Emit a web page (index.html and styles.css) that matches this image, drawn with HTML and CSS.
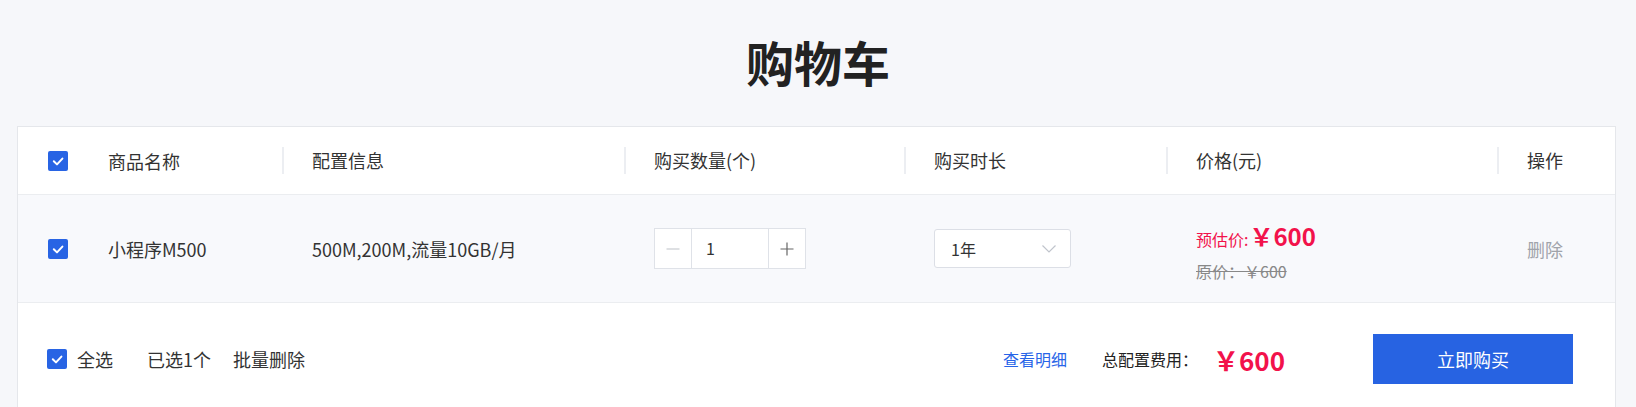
FILE: index.html
```html
<!DOCTYPE html>
<html lang="zh-CN">
<head>
    <meta charset="UTF-8">
    <meta name="viewport" content="width=device-width, initial-scale=1.0">
    <title>购物车</title>
    <link rel="stylesheet" href="styles.css">
</head>
<body>
    <h1 class="title">购物车</h1>

    <div class="cart">
        <div class="cart-head">
            <div class="cell cell-first">
                <span class="check"><svg viewBox="0 0 20 20"><path d="M5.8 10.2l3.2 3.2 5.4-5.8"/></svg></span>
                <span>商品名称</span>
            </div>
            <div class="cell"><span class="th">配置信息</span></div>
            <div class="cell"><span class="th">购买数量(个)</span></div>
            <div class="cell"><span class="th">购买时长</span></div>
            <div class="cell"><span class="th">价格(元)</span></div>
            <div class="cell"><span class="th">操作</span></div>
        </div>

        <div class="cart-row">
            <div class="cell cell-first">
                <span class="check"><svg viewBox="0 0 20 20"><path d="M5.8 10.2l3.2 3.2 5.4-5.8"/></svg></span>
                <span>小程序M500</span>
            </div>
            <div class="cell td">500M,200M,流量10GB/月</div>
            <div class="cell td">
                <div class="stepper">
                    <span class="step step-minus"><svg viewBox="0 0 14 14"><path d="M0.5 7h13"/></svg></span>
                    <span class="step-value">1</span>
                    <span class="step step-plus"><svg viewBox="0 0 14 14"><path d="M0.5 7h13M7 0.5v13"/></svg></span>
                </div>
            </div>
            <div class="cell td">
                <div class="select">
                    <span>1年</span>
                    <svg class="arrow" viewBox="0 0 14 8"><path d="M0.5 0.5l6.5 6.5 6.5-6.5"/></svg>
                </div>
            </div>
            <div class="cell td">
                <div class="price">
                    <div class="price-now"><span class="price-label">预估价:</span><span class="price-big">￥600</span></div>
                    <div class="price-old">原价：￥600</div>
                </div>
            </div>
            <div class="cell td"><span class="remove">删除</span></div>
        </div>

        <div class="cart-foot">
            <div class="foot-left">
                <span class="check"><svg viewBox="0 0 20 20"><path d="M5.8 10.2l3.2 3.2 5.4-5.8"/></svg></span>
                <span class="all">全选</span>
                <span class="picked">已选1个</span>
                <span class="batch">批量删除</span>
            </div>
            <div class="foot-right">
                <a class="detail" href="#">查看明细</a>
                <span class="total-label">总配置费用：</span>
                <span class="total">￥600</span>
                <button class="buy" type="button">立即购买</button>
            </div>
        </div>
    </div>
</body>
</html>
```

FILE: styles.css
```css
body {
    margin: 0;
    background: #f6f7fa;
    font-family: "Noto Sans CJK SC", "Noto Sans", sans-serif;
    color: #333;
}

.title {
    margin: 0 0 33px;
    padding-top: 29px;
    font-size: 48px;
    line-height: 64px;
    font-weight: bold;
    text-align: center;
    color: #222;
}

.cart {
    margin: 0 20px 0 17px;
    border: 1px solid #e5e7eb;
    border-bottom: none;
    background: #fff;
}

.cart-head,
.cart-row {
    display: grid;
    grid-template-columns: 264px 342px 280px 262px 331px 1fr;
    border-bottom: 1px solid #ebedf0;
}

.cart-head {
    height: 67px;
    font-size: 18px;
}

.cart-row {
    height: 107px;
    background: #f8f9fc;
    font-size: 18px;
}

.cell {
    display: flex;
    align-items: center;
}

.cell-first {
    padding-left: 30px;
    gap: 40px;
}

.th {
    border-left: 2px solid #eceef2;
    padding-left: 28px;
    line-height: 27px;
}

.td {
    padding-left: 30px;
}

.check {
    width: 20px;
    height: 20px;
    border-radius: 2px;
    background: #2864e4;
    flex-shrink: 0;
}

.check svg {
    display: block;
    width: 20px;
    height: 20px;
    fill: none;
    stroke: #fff;
    stroke-width: 2;
    stroke-linecap: round;
    stroke-linejoin: round;
}

/* quantity stepper */
.stepper {
    display: flex;
    height: 39px;
    border: 1px solid #dfe2e8;
    background: #fff;
}

.step {
    width: 36px;
    display: flex;
    align-items: center;
    justify-content: center;
}

.step svg {
    width: 14px;
    height: 14px;
    fill: none;
    stroke-width: 1.2;
}

.step-minus {
    border-right: 1px solid #dfe2e8;
}

.step-minus svg {
    stroke: #c8cbd1;
}

.step-plus {
    border-left: 1px solid #dfe2e8;
}

.step-plus svg {
    stroke: #666;
}

.step-value {
    width: 62px;
    padding-left: 14px;
    font-size: 16px;
    line-height: 39px;
}

/* duration select */
.select {
    width: 135px;
    height: 37px;
    box-sizing: content-box;
    border: 1px solid #dcdfe6;
    border-radius: 3px;
    background: #fff;
    display: flex;
    align-items: center;
    justify-content: space-between;
    font-size: 16px;
}

.select span {
    padding-left: 16px;
}

.select .arrow {
    width: 14px;
    height: 8px;
    margin-right: 14px;
    fill: none;
    stroke: #c0c4cc;
    stroke-width: 1.2;
}

/* price */
.price {
    display: flex;
    flex-direction: column;
    gap: 5px;
    padding-top: 4px;
}

.price-now {
    color: #f2124b;
    line-height: 32px;
    display: flex;
    align-items: baseline;
    gap: 1px;
}

.price-label {
    font-size: 16px;
}

.price-big {
    font-size: 24px;
    font-weight: bold;
}

.price-old {
    font-size: 16px;
    line-height: 22px;
    color: #888;
    text-decoration: line-through;
}

.remove {
    color: #a0a3aa;
    font-size: 18px;
}

/* footer */
.cart-foot {
    display: flex;
    justify-content: space-between;
    align-items: center;
    padding: 31px 42px 31px 29px;
    font-size: 18px;
}

.foot-left,
.foot-right {
    display: flex;
    align-items: center;
}

.all {
    margin-left: 10px;
}

.picked {
    margin-left: 34px;
}

.batch {
    margin-left: 22px;
}

.detail {
    color: #2764e8;
    font-size: 16px;
    text-decoration: none;
    margin-right: 35px;
}

.total-label {
    font-size: 16px;
    color: #222;
}

.total {
    margin-left: 15px;
    font-size: 26px;
    font-weight: bold;
    color: #f2124b;
}

.buy {
    margin-left: 88px;
    width: 200px;
    height: 50px;
    border: none;
    background: #2763e2;
    color: #fff;
    font-family: inherit;
    font-size: 18px;
    cursor: pointer;
}
```
